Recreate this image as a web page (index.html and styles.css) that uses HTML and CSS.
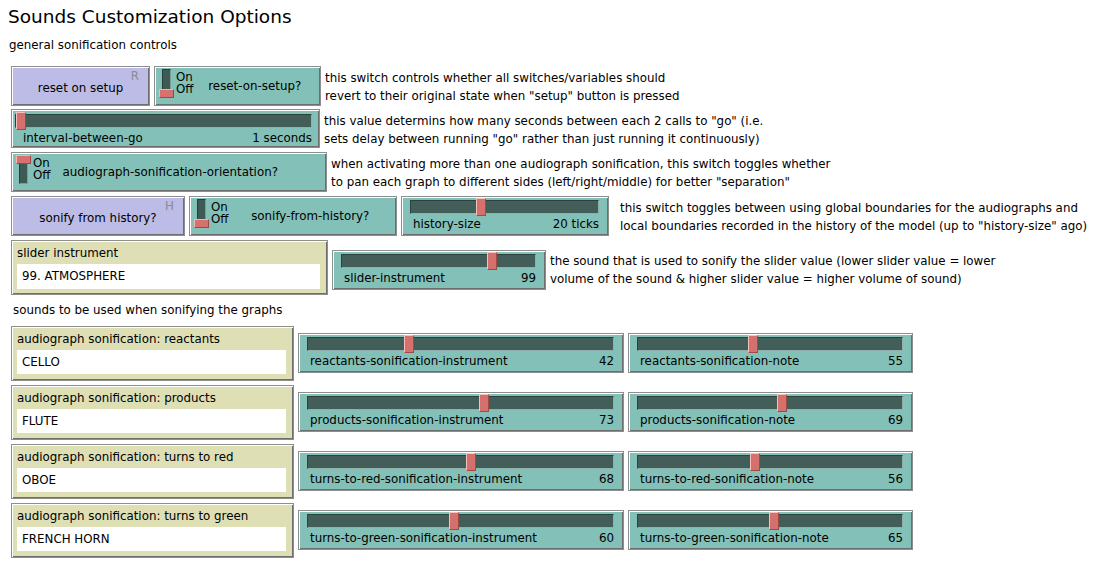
FILE: index.html
```html
<!DOCTYPE html>
<html lang="en">
<head>
  <meta charset="UTF-8" />
  <title>Sounds Customization Options</title>
  <link rel="stylesheet" href="styles.css">
</head>
<body>
  <div class="panel">
    <h1 class="title">Sounds Customization Options</h1>
    <p class="sub">general sonification controls</p>

    <div class="rows">
      <div class="row row-1">
        <div class="widget button reset-btn">
          <span class="key">R</span>
          <span class="btn-label">reset on setup</span>
        </div>
        <div class="widget switch reset-switch">
          <div class="toggle"><span class="bar"></span><span class="knob off"></span></div>
          <div class="onoff"><span>On</span><span>Off</span></div>
          <div class="switch-label">reset-on-setup?</div>
        </div>
        <div class="desc">this switch controls whether all switches/variables should<br>revert to their original state when "setup" button is pressed</div>
      </div>

      <div class="row row-2">
        <div class="widget slider interval-slider">
          <div class="track"><span class="thumb" style="left: calc((100% - 10px) * 0)"></span></div>
          <div class="slider-text"><span>interval-between-go</span><span>1 seconds</span></div>
        </div>
        <div class="desc">this value determins how many seconds between each 2 calls to "go" (i.e.<br>sets delay between running "go" rather than just running it continuously)</div>
      </div>

      <div class="row row-3">
        <div class="widget switch orientation-switch">
          <div class="toggle"><span class="bar"></span><span class="knob on"></span></div>
          <div class="onoff"><span>On</span><span>Off</span></div>
          <div class="switch-label">audiograph-sonification-orientation?</div>
        </div>
        <div class="desc">when activating more than one audiograph sonification, this switch toggles whether<br>to pan each graph to different sides (left/right/middle) for better "separation"</div>
      </div>

      <div class="row row-4">
        <div class="widget button history-btn">
          <span class="key">H</span>
          <span class="btn-label">sonify from history?</span>
        </div>
        <div class="widget switch history-switch">
          <div class="toggle"><span class="bar"></span><span class="knob off"></span></div>
          <div class="onoff"><span>On</span><span>Off</span></div>
          <div class="switch-label">sonify-from-history?</div>
        </div>
        <div class="widget slider history-slider">
          <div class="track"><span class="thumb" style="left: calc((100% - 10px) * 0.37)"></span></div>
          <div class="slider-text"><span>history-size</span><span>20 ticks</span></div>
        </div>
        <div class="desc desc-wide">this switch toggles between using global boundaries for the audiographs and<br>local boundaries recorded in the history of the model (up to "history-size" ago)</div>
      </div>

      <div class="row row-5">
        <div class="widget chooser instrument-chooser">
          <div class="chooser-label">slider instrument</div>
          <div class="chooser-value">99. ATMOSPHERE</div>
        </div>
        <div class="widget slider instrument-slider">
          <div class="track"><span class="thumb" style="left: calc((100% - 10px) * 0.79)"></span></div>
          <div class="slider-text"><span>slider-instrument</span><span>99</span></div>
        </div>
        <div class="desc desc-low">the sound that is used to sonify the slider value (lower slider value = lower<br>volume of the sound &amp; higher slider value = higher volume of sound)</div>
      </div>

      <p class="section-note">sounds to be used when sonifying the graphs</p>

      <div class="row graph-row first">
        <div class="widget chooser graph-chooser">
          <div class="chooser-label">audiograph sonification: reactants</div>
          <div class="chooser-value">CELLO</div>
        </div>
        <div class="widget slider instr-slider">
          <div class="track"><span class="thumb" style="left: calc((100% - 10px) * 0.325)"></span></div>
          <div class="slider-text"><span>reactants-sonification-instrument</span><span>42</span></div>
        </div>
        <div class="widget slider note-slider">
          <div class="track"><span class="thumb" style="left: calc((100% - 10px) * 0.434)"></span></div>
          <div class="slider-text"><span>reactants-sonification-note</span><span>55</span></div>
        </div>
      </div>

      <div class="row graph-row">
        <div class="widget chooser graph-chooser">
          <div class="chooser-label">audiograph sonification: products</div>
          <div class="chooser-value">FLUTE</div>
        </div>
        <div class="widget slider instr-slider">
          <div class="track"><span class="thumb" style="left: calc((100% - 10px) * 0.58)"></span></div>
          <div class="slider-text"><span>products-sonification-instrument</span><span>73</span></div>
        </div>
        <div class="widget slider note-slider">
          <div class="track"><span class="thumb" style="left: calc((100% - 10px) * 0.547)"></span></div>
          <div class="slider-text"><span>products-sonification-note</span><span>69</span></div>
        </div>
      </div>

      <div class="row graph-row">
        <div class="widget chooser graph-chooser">
          <div class="chooser-label">audiograph sonification: turns to red</div>
          <div class="chooser-value">OBOE</div>
        </div>
        <div class="widget slider instr-slider">
          <div class="track"><span class="thumb" style="left: calc((100% - 10px) * 0.537)"></span></div>
          <div class="slider-text"><span>turns-to-red-sonification-instrument</span><span>68</span></div>
        </div>
        <div class="widget slider note-slider">
          <div class="track"><span class="thumb" style="left: calc((100% - 10px) * 0.441)"></span></div>
          <div class="slider-text"><span>turns-to-red-sonification-note</span><span>56</span></div>
        </div>
      </div>

      <div class="row graph-row">
        <div class="widget chooser graph-chooser">
          <div class="chooser-label">audiograph sonification: turns to green</div>
          <div class="chooser-value">FRENCH HORN</div>
        </div>
        <div class="widget slider instr-slider">
          <div class="track"><span class="thumb" style="left: calc((100% - 10px) * 0.477)"></span></div>
          <div class="slider-text"><span>turns-to-green-sonification-instrument</span><span>60</span></div>
        </div>
        <div class="widget slider note-slider">
          <div class="track"><span class="thumb" style="left: calc((100% - 10px) * 0.516)"></span></div>
          <div class="slider-text"><span>turns-to-green-sonification-note</span><span>65</span></div>
        </div>
      </div>
    </div>
  </div>
</body>
</html>
```

FILE: styles.css
```css
body {
  margin: 0;
  background-color: #ffffff;
  color: #000000;
  font-family: "DejaVu Sans", sans-serif;
  font-size: 11.85px;
}
.panel {
  padding: 4px 0 0 8px;
}
.title {
  margin: 0;
  font-size: 18.5px;
  font-weight: normal;
  line-height: 26px;
}
.sub {
  margin: 8px 0 0 1px;
  line-height: 14px;
}
.rows {
  margin-left: 3px;
}
.row {
  display: flex;
  align-items: flex-start;
  gap: 4px;
  margin-top: 4px;
}
.row-1 {
  margin-top: 14px;
}
.row-2 {
  margin-top: 3px;
}
.desc {
  line-height: 18px;
  padding-top: 3px;
  white-space: nowrap;
}
.desc-wide {
  margin-left: 7px;
}
.desc-low {
  padding-top: 12px;
}
.section-note {
  margin: 7px 0 0 2px;
  line-height: 16px;
}

/* widget frame */
.widget {
  box-sizing: border-box;
  position: relative;
  flex: none;
  height: 40px;
  border: 1px solid #8e8e8e;
  box-shadow: inset 1px 1px 0 #ffffff, inset -1px -1px 0 #6e6e6e;
}

/* buttons */
.button {
  background-color: #bcbce6;
  display: flex;
  align-items: center;
  justify-content: center;
}
.btn-label {
  padding-top: 4px;
}
.key {
  position: absolute;
  top: 2px;
  right: 10px;
  color: #8c8c8c;
}
.reset-btn { width: 139px; }
.history-btn { width: 174px; }

/* switches */
.switch {
  background-color: #83c0b7;
  display: flex;
  align-items: flex-start;
  padding-left: 4px;
}
.toggle {
  position: relative;
  width: 15px;
  height: 29px;
  margin-top: 2px;
}
.bar {
  position: absolute;
  left: 3px;
  top: 0;
  width: 9px;
  height: 100%;
  box-sizing: border-box;
  background-color: #3e5a55;
  border: 1px solid #2a3d39;
  border-right-color: #7a9c96;
  border-bottom-color: #7a9c96;
}
.knob {
  position: absolute;
  left: 0;
  width: 15px;
  height: 9px;
  box-sizing: border-box;
  background-color: #d8716d;
  border: 1px solid #a04844;
  border-top-color: #f3b5b1;
  border-left-color: #f3b5b1;
}
.knob.off { bottom: 0; }
.knob.on { top: 0; }
.onoff {
  display: flex;
  flex-direction: column;
  margin: 4px 0 0 2px;
  line-height: 12px;
}
.switch-label {
  flex: 1;
  text-align: center;
  align-self: center;
  padding-right: 4px;
}
.reset-switch { width: 167px; }
.orientation-switch { width: 316px; }
.orientation-switch .switch-label {
  flex: none;
  margin-left: 12px;
}
.history-switch { width: 208px; }

/* sliders */
.slider {
  background-color: #83c0b7;
  padding: 3px 9px 0 8px;
}
.track {
  position: relative;
  height: 14px;
  box-sizing: border-box;
  background-color: #435e59;
  border: 1px solid #2c403c;
  border-right-color: #8fb1ab;
  border-bottom-color: #8fb1ab;
}
.thumb {
  position: absolute;
  top: -3px;
  width: 10px;
  height: 18px;
  box-sizing: border-box;
  background-color: #d6706c;
  border: 1px solid #9e4a46;
  border-top-color: #f2c2be;
  border-left-color: #f2c2be;
}
.slider-text {
  display: flex;
  justify-content: space-between;
  line-height: 16px;
  margin-top: 2px;
  padding-left: 3px;
  white-space: nowrap;
}
.interval-slider {
  width: 309px;
  height: 39px;
  padding: 3px 7px 0 3px;
}
.interval-slider .track { margin-top: 1px; }
.interval-slider .slider-text { padding-left: 8px; }
.history-slider { width: 208px; }
.instrument-slider { width: 214px; margin-top: 10px; }
.instr-slider { width: 326px; margin-top: 7px; }
.note-slider { width: 285px; margin-top: 7px; }

/* choosers */
.chooser {
  background-color: #dfdfb6;
  height: 55px;
  padding: 5px 7px 0 5px;
}
.chooser-label {
  line-height: 15px;
  white-space: nowrap;
}
.chooser-value {
  margin-top: 3px;
  height: 24px;
  line-height: 24px;
  padding-left: 5px;
  background-color: #ffffff;
}
.instrument-chooser { width: 317px; }
.instrument-chooser .chooser-value { margin-top: 3px; height: 25px; }
.graph-chooser { width: 283px; }
.graph-row.first {
  margin-top: 8px;
}
```
